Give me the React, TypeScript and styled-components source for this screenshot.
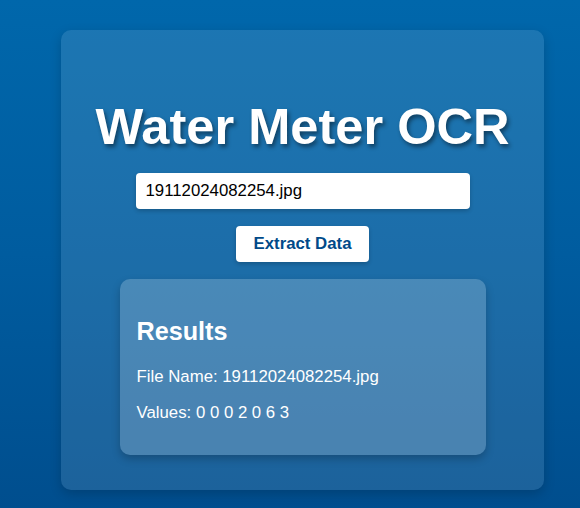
import React from "react";
import styled, { createGlobalStyle } from "styled-components";

const GlobalStyle = createGlobalStyle`
  html, body {
    margin: 0;
    padding: 0;
  }
  body {
    font-family: "Liberation Sans", Arial, sans-serif;
    font-size: 16.8px;
    color: #ffffff;
    background: linear-gradient(to bottom, #0067ab 0%, #005c9f 50%, #004e8e 100%);
    min-height: 508px;
  }
`;

const Page = styled.main`
  box-sizing: border-box;
  min-height: 508px;
  padding: 30px 36px 18px 61px;
`;

const Card = styled.section`
  box-sizing: border-box;
  width: 483px;
  height: 460px;
  padding: 34px 0;
  background: rgba(255, 255, 255, 0.11);
  border-radius: 10px;
  box-shadow: 0 4px 12px rgba(0, 0, 0, 0.18);
  display: flex;
  flex-direction: column;
  align-items: center;
`;

const Title = styled.h1`
  margin: 34px 0 17px;
  font-size: 50.6px;
  line-height: 58px;
  font-weight: 700;
  color: #ffffff;
  text-shadow: 2px 3px 4px rgba(0, 0, 0, 0.45);
  white-space: nowrap;
`;

const FileInput = styled.input`
  box-sizing: border-box;
  width: 334px;
  height: 36px;
  margin: 0 0 17px;
  padding: 0 10px;
  border: none;
  border-radius: 4px;
  background: #ffffff;
  color: #000000;
  font-family: "Liberation Sans", Arial, sans-serif;
  font-size: 16.8px;
  box-shadow: 0 2px 4px rgba(0, 0, 0, 0.2);
  outline: none;
`;

const ActionButton = styled.button`
  box-sizing: border-box;
  width: 133px;
  height: 36px;
  margin: 0 0 17px;
  padding: 0;
  border: none;
  border-radius: 4px;
  background: #ffffff;
  color: #004a89;
  font-family: "Liberation Sans", Arial, sans-serif;
  font-size: 16.8px;
  font-weight: 700;
  box-shadow: 0 2px 4px rgba(0, 0, 0, 0.2);
  cursor: pointer;
`;

const Results = styled.div`
  box-sizing: border-box;
  width: 366px;
  height: 176px;
  padding: 17px;
  border-radius: 10px;
  background: rgba(255, 255, 255, 0.2);
  box-shadow: 0 4px 8px rgba(0, 0, 0, 0.22);
`;

const ResultsTitle = styled.h2`
  margin: 20.5px 0 21px;
  font-size: 25.2px;
  line-height: 29px;
  font-weight: 700;
`;

const Line = styled.p`
  margin: 0 0 17px;
  font-size: 16.8px;
  line-height: 19.4px;
`;

export default function App() {
  return (
    <>
      <GlobalStyle />
      <Page>
        <Card>
          <Title>Water Meter OCR</Title>
          <FileInput type="text" defaultValue="19112024082254.jpg" readOnly />
          <ActionButton type="button">Extract Data</ActionButton>
          <Results>
            <ResultsTitle>Results</ResultsTitle>
            <Line>File Name: 19112024082254.jpg</Line>
            <Line>Values: 0 0 0 2 0 6 3</Line>
          </Results>
        </Card>
      </Page>
    </>
  );
}
